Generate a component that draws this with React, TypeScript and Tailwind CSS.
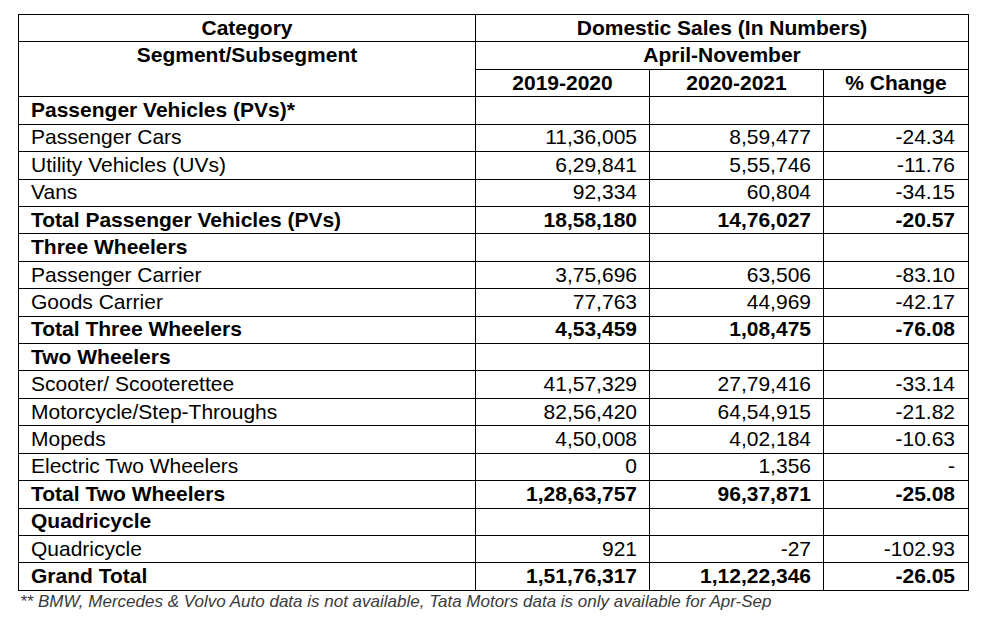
type Row = {
  label: string;
  a?: string;
  b?: string;
  c?: string;
  bold?: boolean;
};

const rows: Row[] = [
  { label: "Passenger Vehicles (PVs)*", bold: true },
  { label: "Passenger Cars", a: "11,36,005", b: "8,59,477", c: "-24.34" },
  { label: "Utility Vehicles (UVs)", a: "6,29,841", b: "5,55,746", c: "-11.76" },
  { label: "Vans", a: "92,334", b: "60,804", c: "-34.15" },
  { label: "Total Passenger Vehicles (PVs)", a: "18,58,180", b: "14,76,027", c: "-20.57", bold: true },
  { label: "Three Wheelers", bold: true },
  { label: "Passenger Carrier", a: "3,75,696", b: "63,506", c: "-83.10" },
  { label: "Goods Carrier", a: "77,763", b: "44,969", c: "-42.17" },
  { label: "Total Three Wheelers", a: "4,53,459", b: "1,08,475", c: "-76.08", bold: true },
  { label: "Two Wheelers", bold: true },
  { label: "Scooter/ Scooterettee", a: "41,57,329", b: "27,79,416", c: "-33.14" },
  { label: "Motorcycle/Step-Throughs", a: "82,56,420", b: "64,54,915", c: "-21.82" },
  { label: "Mopeds", a: "4,50,008", b: "4,02,184", c: "-10.63" },
  { label: "Electric Two Wheelers", a: "0", b: "1,356", c: "-" },
  { label: "Total Two Wheelers", a: "1,28,63,757", b: "96,37,871", c: "-25.08", bold: true },
  { label: "Quadricycle", bold: true },
  { label: "Quadricycle", a: "921", b: "-27", c: "-102.93" },
  { label: "Grand Total", a: "1,51,76,317", b: "1,12,22,346", c: "-26.05", bold: true },
];

// all cells share the same thin black grid, text sits 1px above centre
const cell = "border border-black h-[27.43px] pt-0 pb-[2px] leading-none";

export default function App() {
  return (
    <div className="w-[982px] h-[620px] bg-white text-black pl-[18px] pt-[14px] font-['Liberation_Sans',Arial,sans-serif]">
      <table className="border-collapse table-fixed w-[950px] text-[21px]">
        <colgroup>
          <col className="w-[457px]" />
          <col className="w-[174px]" />
          <col className="w-[174px]" />
          <col className="w-[145px]" />
        </colgroup>
        <thead>
          <tr>
            <th className={`${cell} px-0 text-center font-bold`}>Category</th>
            <th colSpan={3} className={`${cell} px-0 text-center font-bold`}>
              Domestic Sales (In Numbers)
            </th>
          </tr>
          <tr>
            <th rowSpan={2} className="border border-black p-0 pt-[2px] leading-none text-center align-top font-bold">
              Segment/Subsegment
            </th>
            <th colSpan={3} className={`${cell} px-0 text-center font-bold`}>
              April-November
            </th>
          </tr>
          <tr>
            <th className={`${cell} px-0 text-center font-bold`}>2019-2020</th>
            <th className={`${cell} px-0 text-center font-bold`}>2020-2021</th>
            <th className={`${cell} px-0 text-center font-bold`}>% Change</th>
          </tr>
        </thead>
        <tbody>
          {rows.map((r, i) => (
            <tr key={i} className={r.bold ? "font-bold" : "font-normal"}>
              <td className={`${cell} pl-[12px] pr-0 text-left`}>{r.label}</td>
              <td className={`${cell} pl-0 pr-[12px] text-right`}>{r.a ?? ""}</td>
              <td className={`${cell} pl-0 pr-[12px] text-right`}>{r.b ?? ""}</td>
              <td className={`${cell} pl-0 pr-[13px] text-right`}>{r.c ?? ""}</td>
            </tr>
          ))}
        </tbody>
      </table>
      <p className="pl-[2px] pt-[1px] text-[17px] leading-[20px] italic text-[#3a3a3a]">
        ** BMW, Mercedes &amp; Volvo Auto data is not available, Tata Motors data is only available for Apr-Sep
      </p>
    </div>
  );
}
